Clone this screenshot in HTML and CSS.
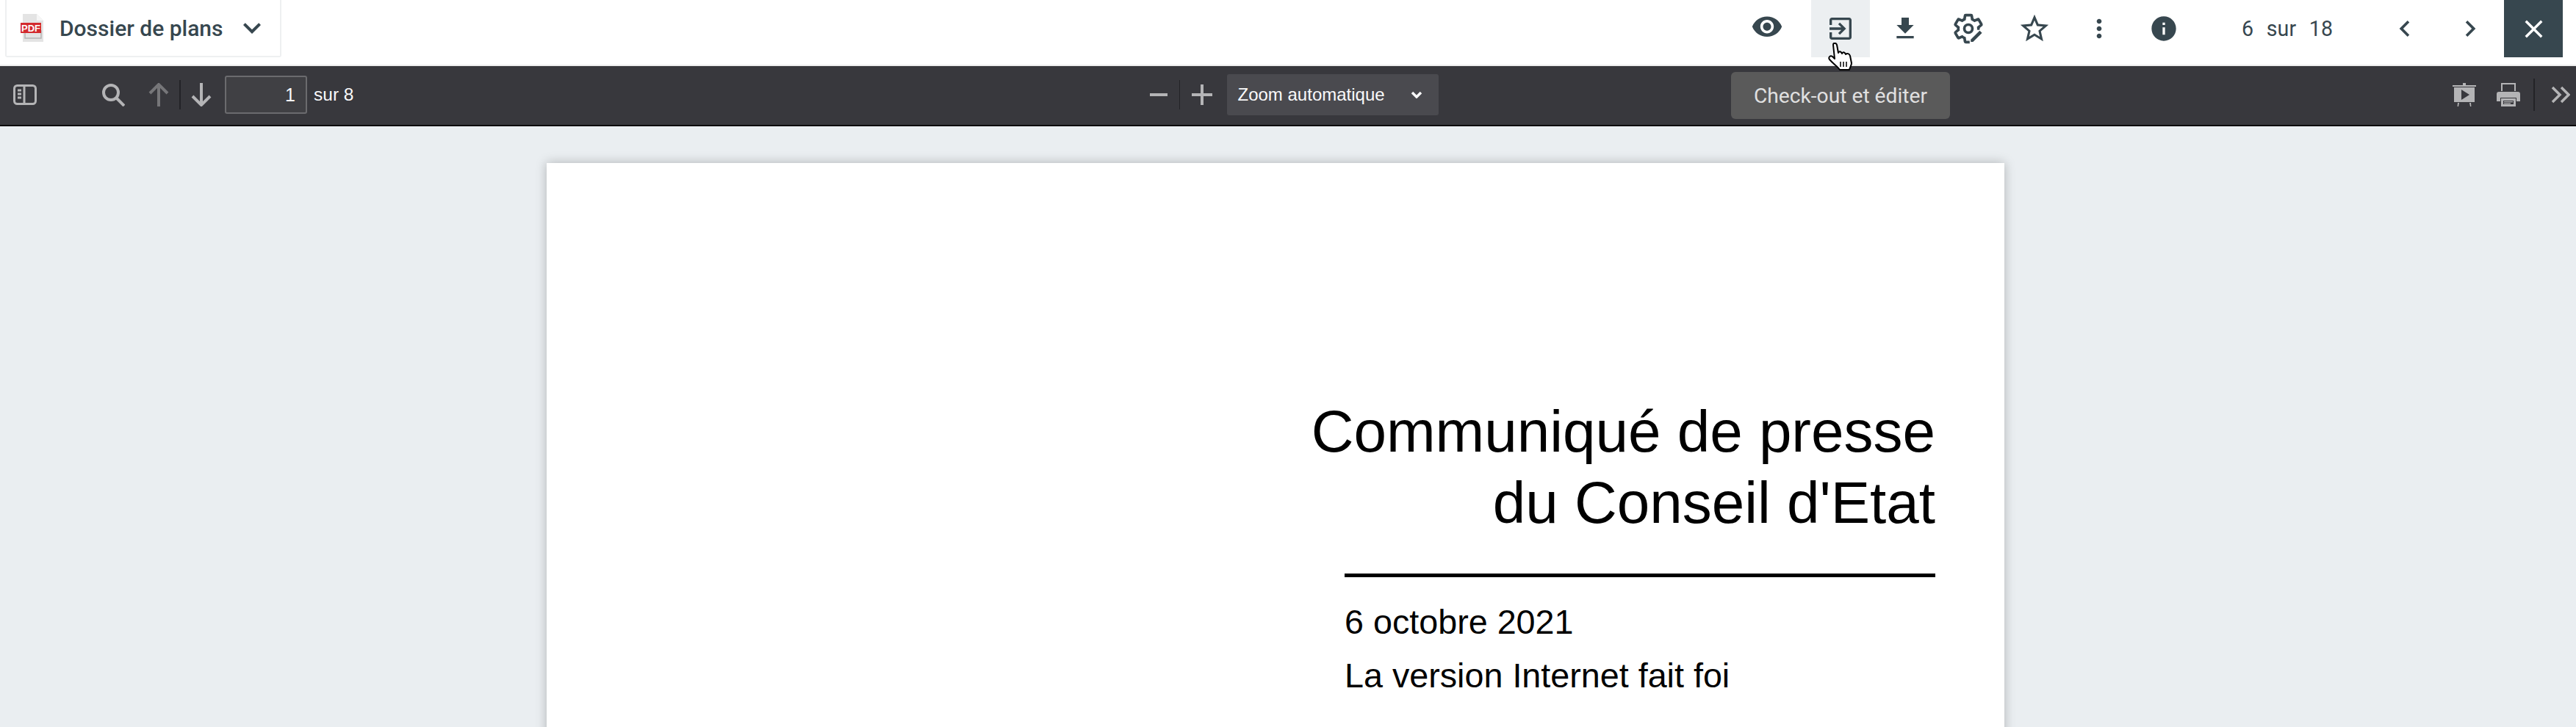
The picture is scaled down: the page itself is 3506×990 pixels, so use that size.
FILE: index.html
```html
<!DOCTYPE html>
<html lang="fr">
<head>
<meta charset="utf-8">
<title>Dossier de plans</title>
<link rel="stylesheet" href="styles.css">
</head>
<body>
<div class="app">
  <header class="topbar">
    <div class="doc-card">
      <svg class="pdf-icon" viewBox="0 0 32 38">
        <path d="M3 0H22L31 9V38H3Z" fill="#e4e4e4"/>
        <path d="M22 0L31 9H22Z" fill="#f6f6f6"/>
        <rect x="6" y="23" width="22" height="10" fill="none" stroke="#b5b5b5" stroke-width="1.5"/>
        <rect x="0" y="12" width="28" height="14" fill="#d32a2e"/>
        <text x="14" y="23.5" class="pdf-label" text-anchor="middle">PDF</text>
      </svg>
      <span class="doc-name">Dossier de plans</span>
      <svg class="doc-chevron" viewBox="0 0 24 24"><path d="M7.41 8.59L12 13.17l4.59-4.58L18 10l-6 6-6-6z"/></svg>
    </div>
    <div class="actions">
      <button class="tb-btn gap-eye"><svg class="ico44" viewBox="0 1.5 24 24"><path d="M12 4.5C7 4.5 2.73 7.61 1 12c1.73 4.39 6 7.5 11 7.5s9.27-3.11 11-7.5c-1.73-4.39-6-7.5-11-7.5zM12 17c-2.76 0-5-2.24-5-5s2.24-5 5-5 5 2.24 5 5-2.24 5-5 5zm0-8c-1.66 0-3 1.34-3 3s1.34 3 3 3 3-1.34 3-3-1.34-3-3-3z"/></svg></button>
      <button class="tb-btn is-hover"><svg class="ico40" viewBox="0 0 24 24"><path d="M10.09 15.59L11.5 17l5-5-5-5-1.41 1.41L12.67 11H3v2h9.67l-2.58 2.59zM19 3H5c-1.11 0-2 .9-2 2v4h2V5h14v14H5v-4H3v4c0 1.1.89 2 2 2h14c1.1 0 2-.9 2-2V5c0-1.1-.9-2-2-2z"/></svg></button>
      <button class="tb-btn"><svg class="ico40" viewBox="0 0 24 24"><path d="M19 9h-4V3H9v6H5l7 7 7-7zM5 18v2h14v-2H5z"/></svg></button>
      <button class="tb-btn gap-less"><svg class="ico44" viewBox="0 0 24 24">
        <path class="gear" d="M19.43 12.98c.04-.32.07-.64.07-.98s-.03-.66-.07-.98l2.11-1.65c.19-.15.24-.42.12-.64l-2-3.46c-.12-.22-.39-.3-.61-.22l-2.49 1c-.52-.4-1.08-.73-1.69-.98l-.38-2.65C14.46 2.18 14.25 2 14 2h-4c-.25 0-.46.18-.49.42l-.38 2.65c-.61.25-1.17.59-1.69.98l-2.49-1c-.23-.09-.49 0-.61.22l-2 3.46c-.13.22-.07.49.12.64l2.11 1.65c-.04.32-.07.65-.07.98s.03.66.07.98l-2.11 1.65c-.19.15-.24.42-.12.64l2 3.46c.12.22.39.3.61.22l2.49-1c.52.4 1.08.73 1.69.98l.38 2.65c.03.24.24.42.49.42h3"/>
        <circle class="gear" cx="12" cy="12" r="3"/>
        <path d="M13.4 22.2v-2.2l7-7 2.2 2.2-7 7z" class="pencil"/>
      </svg></button>
      <button class="tb-btn gap-more"><svg class="ico46" viewBox="0 0 24 24"><path d="M22 9.24l-7.19-.62L12 2 9.19 8.63 2 9.24l5.46 4.73L5.82 21 12 17.27 18.18 21l-1.63-7.03L22 9.24zM12 15.4l-3.76 2.27 1-4.28-3.32-2.88 4.38-.38L12 6.1l1.71 4.04 4.38.38-3.32 2.88 1 4.28L12 15.4z"/></svg></button>
      <button class="tb-btn"><svg class="ico40" viewBox="0 0 24 24"><path d="M12 8c1.1 0 2-.9 2-2s-.9-2-2-2-2 .9-2 2 .9 2 2 2zm0 2c-1.1 0-2 .9-2 2s.9 2 2 2 2-.9 2-2-.9-2-2-2zm0 6c-1.1 0-2 .9-2 2s.9 2 2 2 2-.9 2-2-.9-2-2-2z"/></svg></button>
      <button class="tb-btn"><svg class="ico40" viewBox="0 0 24 24"><path d="M12 2C6.48 2 2 6.48 2 12s4.48 10 10 10 10-4.48 10-10S17.52 2 12 2zm1 15h-2v-6h2v6zm0-8h-2V7h2v2z"/></svg></button>
      <div class="counter"><span>6</span><span>sur</span><span>18</span></div>
      <button class="nav-btn"><svg class="ico44" viewBox="0 0 24 24"><path d="M15.41 7.41L14 6l-6 6 6 6 1.41-1.41L10.83 12z"/></svg></button>
      <button class="nav-btn"><svg class="ico44" viewBox="0 0 24 24"><path d="M10 6L8.59 7.41 13.17 12l-4.58 4.59L10 18l6-6z"/></svg></button>
      <button class="close-btn"><svg class="ico41" viewBox="0 0 24 24"><path d="M19 6.41L17.59 5 12 10.59 6.41 5 5 6.41 10.59 12 5 17.59 6.41 19 12 13.41 17.59 19 19 17.59 13.41 12z"/></svg></button>
    </div>
  </header>

  <div class="pdf-toolbar">
    <div class="tl">
      <svg class="pi sidebar" viewBox="0 0 32 28" fill="none"><rect x="1.5" y="1.5" width="29" height="25" rx="4"/><path d="M15 2V26M6 8H11M6 13H11M6 18H11"/></svg>
      <svg class="pi search" viewBox="0 0 32 32" fill="none"><circle cx="13" cy="13" r="10"/><path d="M20.5 20.5L31 31"/></svg>
      <svg class="pi up dim" viewBox="0 0 28 32" fill="none"><path d="M14 32V2M2 14L14 2L26 14"/></svg>
      <span class="split"></span>
      <svg class="pi down" viewBox="0 0 28 32" fill="none"><path d="M14 0V30M2 18L14 30L26 18"/></svg>
      <input class="page-input" value="1">
      <span class="page-total">sur 8</span>
    </div>
    <div class="tm">
      <svg class="pi minus" viewBox="0 0 24 4" fill="none"><path d="M0 2H24"/></svg>
      <span class="split-s"></span>
      <svg class="pi plus" viewBox="0 0 28 28" fill="none"><path d="M0 14H28M14 0V28"/></svg>
      <div class="zoom-select">
        <span>Zoom automatique</span>
        <svg class="zoom-chev" viewBox="0 0 16 10" fill="none"><path d="M2 2L8 8L14 2"/></svg>
      </div>
    </div>
    <div class="tr">
      <svg class="pi-fill present" viewBox="0 0 32 32"><path d="M0 3H32V5H0ZM14 0H18V3H14ZM2 6H30V26H2ZM7 27H9L8 32H6.6ZM23 27H25L25.4 32H24Z"/><path d="M12 9L23 16L12 23Z" fill="#38383d"/></svg>
      <svg class="pi-fill print" viewBox="0 0 32 32"><path fill-rule="evenodd" d="M6 0H26V11H24V2H8V11H6ZM3 12H29C31 12 32 13 32 15V25H27V20H5V25H0V15C0 13 1 12 3 12ZM6 21H26V32H6ZM9 24V29H23V24Z"/><path d="M10 25H22V26.3H10ZM10 27.2H19V28.5H10Z"/></svg>
      <span class="split-r"></span>
      <svg class="pi more" viewBox="0 0 26 24" fill="none"><path d="M2 2L12 12L2 22M14 2L24 12L14 22"/></svg>
    </div>
  </div>

  <main class="viewer">
    <article class="page">
      <h1 class="title">Communiqué de presse<br>du Conseil d'Etat</h1>
      <div class="meta">
        <p class="meta-line">6 octobre 2021</p>
        <p class="meta-line">La version Internet fait foi</p>
      </div>
    </article>
  </main>

  <div class="tooltip">Check-out et éditer</div>
  <svg class="hand" viewBox="0 0 34 38">
    <path d="M7 3C7 0 11 0 12 3L14 14C15 11 18 12 19 15C20 12 23 13 24 16C26 14 29 15 30 18L32 28C32 31 30 33 29 37H16C13 32 8 30 2 23C0 20 3 17 6 19L9 22Z" fill="#fff" stroke="#000" stroke-width="2" stroke-linejoin="round"/>
    <path d="M17 26V33M21 26V33M25 26V33" stroke="#000" stroke-width="1.5"/>
  </svg>
</div>
</body>
</html>
```
FILE: styles.css
```css
* { box-sizing: border-box; }
html, body { margin: 0; height: 100%; overflow: hidden; }
body { font-family: Roboto, "Liberation Sans", sans-serif; background: #fff; }
button { border: 0; padding: 0; background: none; }

.app { position: relative; display: flex; flex-direction: column; height: 990px; }

.topbar {
  flex: none; height: 90px; display: flex; justify-content: space-between; align-items: flex-start;
  background: #fff; border-bottom: 2px solid #eeeeee;
}
.doc-card {
  display: flex; align-items: center; width: 376px; height: 78px; margin-left: 7px;
  border: 2px solid #eef0f1; border-top: 0; border-radius: 0 0 3px 3px;
  padding-left: 19px;
}
.pdf-icon { width: 32px; height: 38px; flex: none; }
.pdf-label { font: 700 13px "Liberation Sans", sans-serif; fill: #fff; }
.doc-name { margin-left: 21px; font-size: 30px; font-weight: 500; color: #37474f; white-space: nowrap; }
.doc-chevron { width: 48px; height: 48px; margin-left: 15px; fill: #37474f; flex: none; }

.actions { display: flex; align-items: center; height: 78px; padding-right: 18px; }
.actions svg { fill: #37474f; display: block; }
.tb-btn { width: 80px; height: 78px; margin-right: 8px; display: flex; align-items: center; justify-content: center; flex: none; }
.gap-eye { margin-right: 20px; }
.gap-less { margin-right: 10px; margin-left: -2px; }
.gap-more { margin-right: 8px; }
.is-hover { background: #eceff1; }
.ico40 { width: 40px; height: 40px; }
.ico41 { width: 41px; height: 41px; }
.ico44 { width: 44px; height: 44px; }
.ico46 { width: 46px; height: 46px; }
.gear { fill: none; stroke: #37474f; stroke-width: 2; }
.actions .gear { fill: none; }
.pencil { fill: #37474f; stroke: #fff; stroke-width: .7; }
.counter {
  display: flex; justify-content: space-between; width: 124px; margin-left: 58px; margin-right: 76px;
  font-size: 28.6px; color: #37474f; flex: none;
}
.nav-btn { width: 44px; height: 44px; flex: none; margin-right: 45px; }
.nav-btn + .nav-btn { margin-right: 24px; }
.close-btn { width: 80px; height: 78px; background: #37474f; display: flex; align-items: center; justify-content: center; flex: none; }
.actions .close-btn svg { fill: #fff; }

.pdf-toolbar {
  flex: none; height: 82px; display: grid; grid-template-columns: 1fr auto 1fr; align-items: center;
  padding: 0 0 2px 16px; background: #38383d; border-bottom: 2px solid #0c0c0d;
  font-family: "Liberation Sans", sans-serif;
}
.tl, .tm, .tr { display: flex; align-items: center; }
.tr { justify-content: flex-end; padding-right: 8px; }
.pi { stroke: #b4b4b6; stroke-width: 4; display: block; flex: none; }
.pi-fill { fill: #b4b4b6; display: block; flex: none; }
.sidebar { width: 32px; height: 28px; margin-left: 2px; stroke-width: 3; }
.search { width: 32px; height: 32px; margin-left: 88px; }
.up { width: 28px; height: 32px; margin-left: 32px; }
.dim { opacity: .5; }
.split { width: 2px; height: 40px; margin: 0 14px; background: #232327; }
.down { width: 28px; height: 32px; }
.page-input {
  width: 112px; height: 52px; margin-left: 18px; padding: 0 14px 0 0; text-align: right;
  background: #404044; border: 2px solid #6b6b6e; border-radius: 3px; color: #f9f9fa;
  font: 25px "Liberation Sans", sans-serif;
}
.page-total { margin-left: 9px; font-size: 24.5px; color: #f9f9fa; }
.minus { width: 24px; height: 4px; }
.split-s { width: 1px; height: 40px; margin: 0 16px; background: #232327; }
.plus { width: 28px; height: 28px; }
.zoom-select {
  display: flex; align-items: center; justify-content: space-between; width: 288px; height: 56px;
  margin-left: 20px; padding: 0 22px 0 15px; background: #4a4a4f; border-radius: 3px;
  color: #f9f9fa; font-size: 24px;
}
.zoom-chev { width: 16px; height: 10px; stroke: #f9f9fa; stroke-width: 3.5; }
.present { width: 32px; height: 32px; }
.print { width: 32px; height: 32px; margin-left: 28px; }
.split-r { width: 2px; height: 44px; margin: 0 22px 0 18px; background: #232327; }
.more { width: 26px; height: 24px; stroke-width: 3.5; }

.viewer { flex: 1; overflow: hidden; background: #eaeef1; padding: 50px 34px 0 0; }
.page {
  width: 1984px; height: 1400px; margin: 0 auto; padding: 0 94px 0 1086px;
  background: #fff; box-shadow: 0 0 14px rgba(0, 0, 0, .25);
  font-family: "Liberation Sans", sans-serif; color: #000;
}
.title {
  margin: 0; padding: 318px 0 48px; text-align: right;
  font-size: 80px; line-height: 96.5px; font-weight: 400; white-space: nowrap;
  display: flex; flex-direction: column; align-items: flex-end;
}
.meta { border-top: 5px solid #000; padding-top: 25px; }
.meta-line { margin: 0; font-size: 46.7px; line-height: 73px; white-space: nowrap; }

.tooltip {
  position: absolute; left: 2356px; top: 98px; width: 298px; height: 64px;
  display: flex; align-items: center; justify-content: center;
  background: #5a5a5a; border-radius: 6px; color: #e0e0e0; font-size: 28.2px;
}
.hand { position: absolute; left: 2488px; top: 58px; width: 34px; height: 38px; }
```
